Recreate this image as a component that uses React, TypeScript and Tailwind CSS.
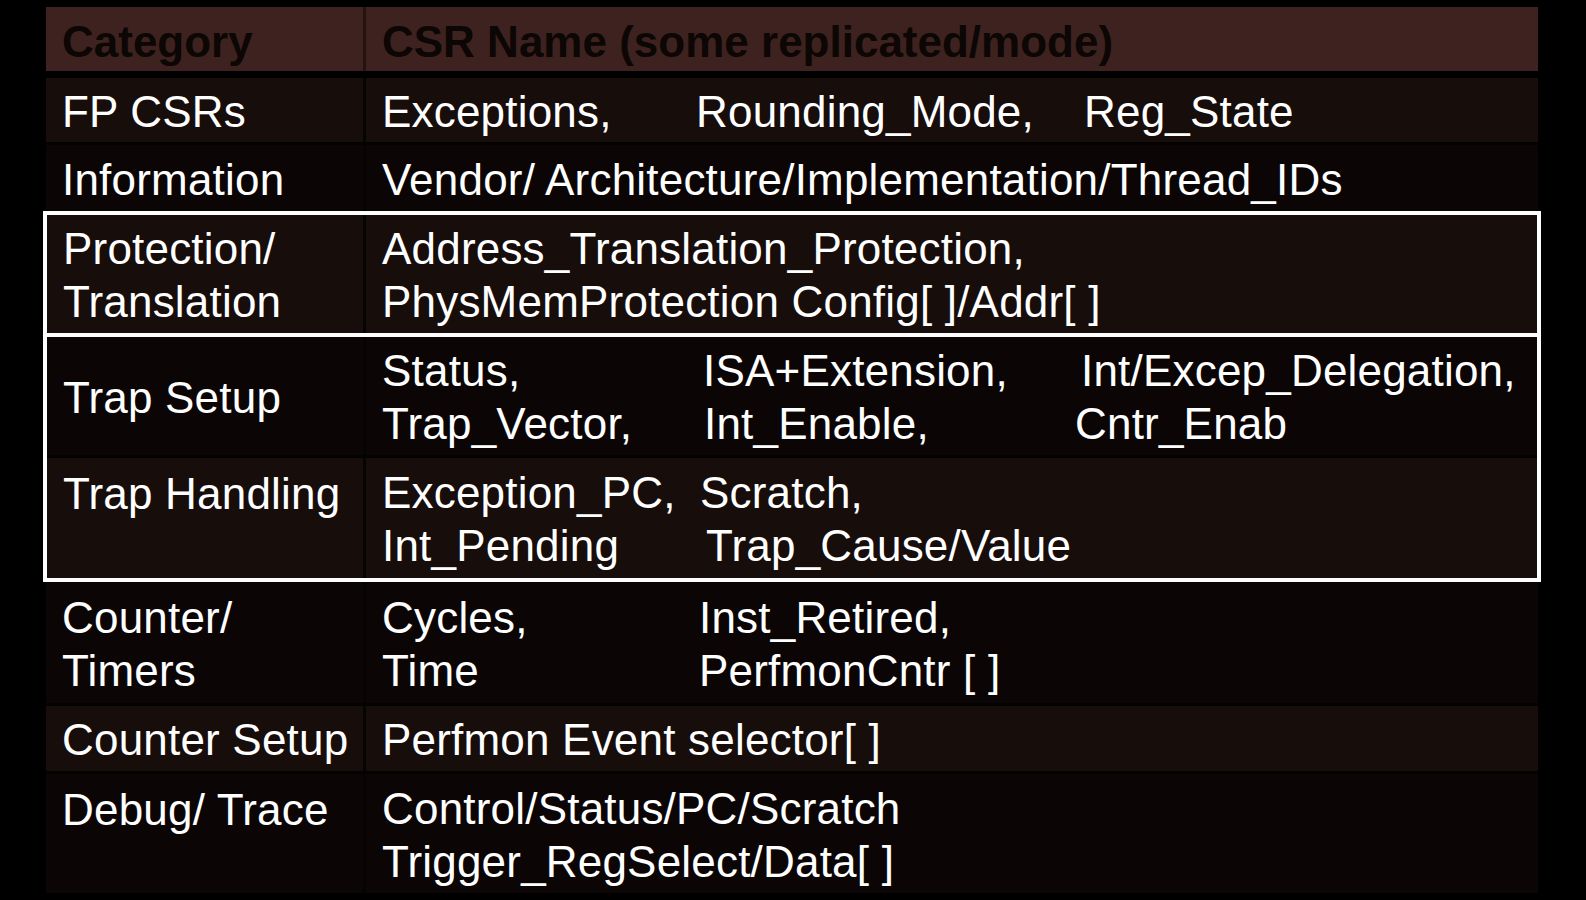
import type { ReactNode } from 'react'

const light = 'bg-[#170d0b]'
const dark = 'bg-[#0b0605]'

interface RowProps {
  height: string
  bg: string
  left: ReactNode
  right: ReactNode
  leftTop?: boolean
  boxed?: boolean
  sep?: boolean
}

function Row({ height, bg, left, right, leftTop, boxed, sep }: RowProps) {
  return (
    <div
      className={`flex ${height} ${sep ? 'border-t-[3px] border-[#050202]' : ''}`}
    >
      <div
        className={`${boxed ? 'w-[319px]' : 'w-[320px]'} flex shrink-0 border-r-[3px] border-[#060303] pl-[16px] ${bg} ${
          leftTop ? 'items-start pt-[9px]' : 'items-center pt-[2px]'
        }`}
      >
        <div>{left}</div>
      </div>
      <div className={`flex flex-1 items-center pt-[2px] pl-[16px] ${bg}`}>
        <div>{right}</div>
      </div>
    </div>
  )
}

export default function App() {
  return (
    <div className="min-h-screen bg-black pt-[7px] pl-[46px] font-['Liberation_Sans',Arial,sans-serif] text-[44px] leading-[53px] tracking-[0.2px] whitespace-nowrap text-white">
      <div className="flex w-[1492px] flex-col">
        {/* header */}
        <div className="flex h-[64px] bg-[#3d221f] font-bold tracking-normal text-[#0c0605]">
          <div className="flex w-[320px] shrink-0 items-center border-r-[3px] border-[#24130f] pt-[4px] pl-[16px]">
            Category
          </div>
          <div className="flex flex-1 items-center pt-[4px] pl-[16px]">
            CSR Name (some replicated/mode)
          </div>
        </div>

        <div className="mt-[7px]">
          <Row
            height="h-[64px]"
            bg={light}
            left="FP CSRs"
            right={
              <div className="flex">
                <span className="w-[314px]">Exceptions,</span>
                <span className="w-[388px]">Rounding_Mode,</span>
                <span>Reg_State</span>
              </div>
            }
          />
          <Row
            sep
            height="h-[69px]"
            bg={dark}
            left="Information"
            right="Vendor/ Architecture/Implementation/Thread_IDs"
          />
        </div>

        <div className="-mx-[3px] border-4 border-b-0 border-white">
          <Row
            boxed
            height="h-[118px]"
            bg={light}
            left={
              <>
                <div>Protection/</div>
                <div>Translation</div>
              </>
            }
            right={
              <>
                <div>Address_Translation_Protection,</div>
                <div>PhysMemProtection Config[ ]/Addr[ ]</div>
              </>
            }
          />
        </div>

        <div className="-mx-[3px] border-4 border-white">
          <Row
            boxed
            height="h-[118px]"
            bg={dark}
            left="Trap Setup"
            right={
              <>
                <div className="flex">
                  <span className="w-[321px]">Status,</span>
                  <span className="w-[378px]">ISA+Extension,</span>
                  <span>Int/Excep_Delegation,</span>
                </div>
                <div className="flex">
                  <span className="w-[322px]">Trap_Vector,</span>
                  <span className="w-[371px]">Int_Enable,</span>
                  <span>Cntr_Enab</span>
                </div>
              </>
            }
          />
          <Row
            boxed
            sep
            leftTop
            height="h-[123px]"
            bg={light}
            left="Trap Handling"
            right={
              <>
                <div className="flex">
                  <span className="w-[318px]">Exception_PC,</span>
                  <span>Scratch,</span>
                </div>
                <div className="flex">
                  <span className="w-[324px]">Int_Pending</span>
                  <span>Trap_Cause/Value</span>
                </div>
              </>
            }
          />
        </div>

        <Row
          height="h-[121px]"
          bg={dark}
          left={
            <>
              <div>Counter/</div>
              <div>Timers</div>
            </>
          }
          right={
            <>
              <div className="flex">
                <span className="w-[317px]">Cycles,</span>
                <span>Inst_Retired,</span>
              </div>
              <div className="flex">
                <span className="w-[317px]">Time</span>
                <span>PerfmonCntr [ ]</span>
              </div>
            </>
          }
        />
        <Row
          sep
          height="h-[68px]"
          bg={light}
          left="Counter Setup"
          right="Perfmon Event selector[ ]"
        />
        <Row
          sep
          leftTop
          height="h-[122px]"
          bg={dark}
          left="Debug/ Trace"
          right={
            <>
              <div>Control/Status/PC/Scratch</div>
              <div>Trigger_RegSelect/Data[ ]</div>
            </>
          }
        />
      </div>
    </div>
  )
}
